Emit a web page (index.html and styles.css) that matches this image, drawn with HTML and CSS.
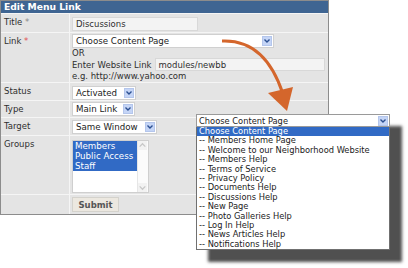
FILE: index.html
```html
<!DOCTYPE html>
<html lang="en">
<head>
    <meta charset="UTF-8">
    <title>Edit Menu Link</title>
    <link rel="stylesheet" href="styles.css">
</head>
<body>
    <div class="editor">
        <div class="panel">
            <div class="panel-head">Edit Menu Link</div>
            <div class="row row-title">
                <div class="label">Title <span class="req">*</span></div>
                <div class="field"><span class="input input-title">Discussions</span></div>
            </div>
            <div class="row row-link">
                <div class="label">Link <span class="req req-on">*</span></div>
                <div class="field">
                    <span class="select select-link">Choose Content Page<span class="drop-btn"><svg viewBox="0 0 8 8"><path d="M1.5 2.5 4 5 6.5 2.5"/></svg></span></span>
                    <div class="note">OR</div>
                    <div class="site-line">Enter Website Link <span class="input input-site">modules/newbb</span></div>
                    <div class="note">e.g. http://www.yahoo.com</div>
                </div>
            </div>
            <div class="row row-status">
                <div class="label">Status</div>
                <div class="field"><span class="select select-status">Activated<span class="drop-btn"><svg viewBox="0 0 8 8"><path d="M1.5 2.5 4 5 6.5 2.5"/></svg></span></span></div>
            </div>
            <div class="row row-type">
                <div class="label">Type</div>
                <div class="field"><span class="select select-type">Main Link<span class="drop-btn"><svg viewBox="0 0 8 8"><path d="M1.5 2.5 4 5 6.5 2.5"/></svg></span></span></div>
            </div>
            <div class="row row-target">
                <div class="label">Target</div>
                <div class="field"><span class="select select-target">Same Window<span class="drop-btn"><svg viewBox="0 0 8 8"><path d="M1.5 2.5 4 5 6.5 2.5"/></svg></span></span></div>
            </div>
            <div class="row row-groups">
                <div class="label">Groups</div>
                <div class="field">
                    <div class="listbox">
                        <ul class="list-items">
                            <li class="picked">Members</li>
                            <li class="picked">Public Access</li>
                            <li class="picked">Staff</li>
                        </ul>
                        <div class="scroll">
                            <svg viewBox="0 0 8 8"><path d="M1.5 5 4 2.5 6.5 5"/></svg>
                            <svg viewBox="0 0 8 8"><path d="M1.5 3 4 5.5 6.5 3"/></svg>
                        </div>
                    </div>
                </div>
            </div>
            <div class="row row-submit">
                <div class="label"></div>
                <div class="field"><button class="submit-btn">Submit</button></div>
            </div>
        </div>

        <svg class="pointer" viewBox="0 0 408 268">
            <path class="pointer-line" d="M222 41 Q265 39 283 94"/>
            <polygon class="pointer-head" points="268,93 293,87 287,111"/>
        </svg>

        <div class="popup">
            <div class="popup-field">Choose Content Page<span class="drop-btn"><svg viewBox="0 0 8 8"><path d="M1.5 2.5 4 5 6.5 2.5"/></svg></span></div>
            <ul class="popup-list">
                <li class="active">Choose Content Page</li>
                <li>-- Members Home Page</li>
                <li>-- Welcome to our Neighborhood Website</li>
                <li>-- Members Help</li>
                <li>-- Terms of Service</li>
                <li>-- Privacy Policy</li>
                <li>-- Documents Help</li>
                <li>-- Discussions Help</li>
                <li>-- New Page</li>
                <li>-- Photo Galleries Help</li>
                <li>-- Log In Help</li>
                <li>-- News Articles Help</li>
                <li>-- Notifications Help</li>
            </ul>
        </div>
    </div>
</body>
</html>
```

FILE: styles.css
```css
:root {
    --head-blue: #3f6592; --row-bg: #e4e4e4; --row-line: #f5f5f5;
    --frame: #8c8c8c; --text: #2f2f2f; --pick-blue: #316ac5;
    --btn-blue: #c5d5f6; --chev: #2b4f91; --orange: #d4662c;
}
body { margin: 0; background: #fff; font-family: "DejaVu Sans", Verdana, sans-serif; font-size: 8.5px; color: var(--text); }
.editor { position: relative; width: 408px; height: 268px; }

.panel { width: 329px; box-sizing: border-box; border: 1px solid var(--frame); background: var(--row-bg); }
.panel-head { height: 12px; line-height: 12px; padding-left: 3px; background: var(--head-blue); color: #fff; font-weight: bold; font-size: 9.2px; }
.row { display: flex; border-top: 1px solid var(--row-line); }
.label { width: 69px; flex: none; box-sizing: border-box; border-right: 1px solid var(--row-line); padding: 3px 0 0 3px; line-height: 10px; }
.req { color: #8a8a8a; }
.req-on { color: #e05050; }
.field { flex: 1; padding-left: 2px; line-height: 10px; }

.row-title .field { padding-top: 3px; padding-bottom: 1px; }
.row-link .field { padding-top: 1px; padding-bottom: 1px; }
.row-status .field { padding-top: 3px; }
.row-type .field { padding-top: 1px; padding-bottom: 1px; }
.row-target .field { padding-top: 2px; padding-bottom: 1px; }
.row-groups .field { padding-top: 4px; padding-bottom: 1px; }
.row-submit .field { padding-top: 2px; padding-bottom: 2px; }

.input { display: flex; align-items: center; box-sizing: border-box; background: #f3f3f3; border: 1px solid #d8d8d8; padding-left: 3px; }
.input-title { width: 126px; height: 14px; }
.input-site { width: 170px; height: 13px; margin-left: 3px; }
.site-line { display: flex; align-items: center; height: 13px; white-space: nowrap; }
.note { height: 10px; }

.select { display: flex; align-items: center; justify-content: space-between; box-sizing: border-box; height: 14px; background: #fff; border: 1px solid #d0d0d0; padding-left: 3px; font-size: 8.7px; color: #222; }
.select-link { width: 202px; }
.select-status { width: 64px; }
.select-type { width: 63px; }
.select-target { width: 85px; }
.drop-btn { display: flex; width: 10px; height: 10px; margin-right: 1px; background: var(--btn-blue); border: 1px solid #b4c6ec; box-sizing: border-box; }
.drop-btn svg { width: 8px; height: 8px; fill: none; stroke: var(--chev); stroke-width: 1.4; }

.listbox { display: flex; width: 77px; height: 53px; box-sizing: border-box; border: 1px solid #cfcfcf; background: #fff; }
.list-items { list-style: none; margin: 0; padding: 0; flex: 1; line-height: 10px; font-size: 8.7px; }
.list-items .picked { background: var(--pick-blue); color: #fff; padding-left: 2px; }
.scroll { width: 10px; display: flex; flex-direction: column; justify-content: space-between; background: #fbfbfb; border-left: 1px solid #e6e6e6; }
.scroll svg { width: 9px; height: 9px; fill: none; stroke: #c8c8c8; stroke-width: 1.2; background: #f2f2f2; }

.submit-btn { display: block; width: 47px; height: 15px; padding: 0; background: #ece8e0; border: 1px solid #d4d2cc; font-family: inherit; font-size: 8.5px; font-weight: bold; color: #555; }

.pointer { position: absolute; left: 0; top: 0; width: 408px; height: 268px; }
.pointer-line { fill: none; stroke: var(--orange); stroke-width: 3; }
.pointer-head { fill: var(--orange); }

.popup { position: absolute; left: 196px; top: 114px; width: 194px; box-shadow: 12px 12px 3px #505050; font-size: 8.3px; color: #222; }
.popup-field { display: flex; align-items: center; justify-content: space-between; height: 13px; box-sizing: border-box; background: #fff; border: 1px solid #9a9a9a; padding-left: 2px; }
.popup-list { list-style: none; margin: 0; padding: 0; background: #fff; border: 1px solid #707070; border-top: none; }
.popup-list li { height: 9.4px; line-height: 9.4px; padding-left: 2px; white-space: nowrap; }
.popup-list .active { background: var(--pick-blue); color: #fff; }
```
